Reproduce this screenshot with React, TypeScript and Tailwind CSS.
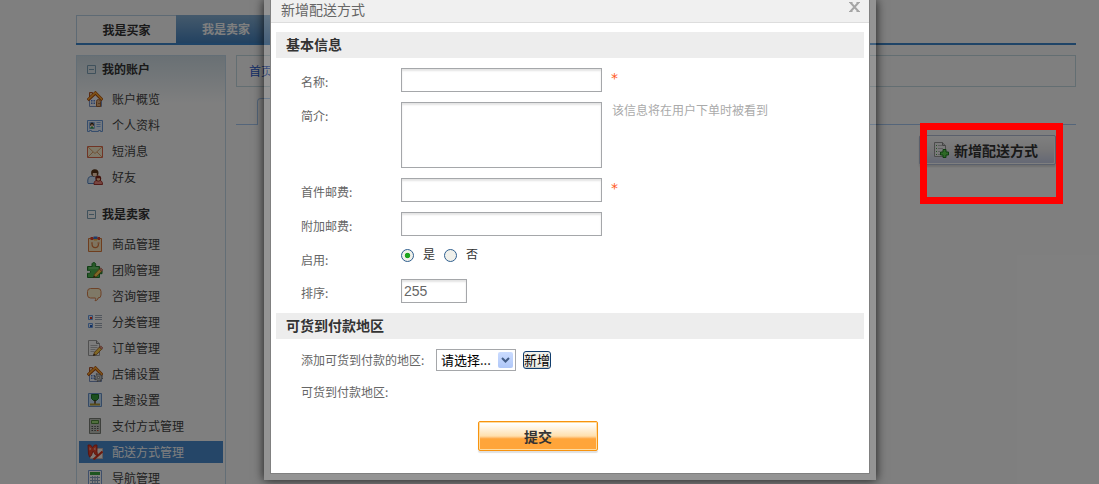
import React, { ReactNode } from "react";

function Icon({ children }: { children: ReactNode }) {
  return (
    <svg className="size-4 shrink-0" viewBox="0 0 16 16" fill="none" aria-hidden="true">
      {children}
    </svg>
  );
}

// small parts shared by several icons
const pencil = (
  <>
    <path d="M6.500 15.500l1-3.200 5-5.300 2.200 2.200-5 5.200z" fill="#ffd04a" stroke="#9a5a20" strokeWidth="0.800" />
    <path d="M12.500 7l1.200-1.200 2.200 2.200-1.200 1.200z" fill="#f0a090" stroke="#a04a30" strokeWidth="0.600" />
    <path d="M6.200 15.800l.7-2 1.400 1.300z" fill="#222" />
  </>
);

const house = (
  <>
    <path d="M2.500 8v7.500h12V8L8.500 2.500z" fill="#f6f8ff" stroke="#7b93c4" />
    <path d="M2.500 1.500h3v3.500l-3 2.500z" fill="#f0c8a0" stroke="#b0552a" />
    <path d="M.7 9.200l7.700-7.200 7 7.200" stroke="#a8480c" strokeWidth="3.200" />
    <path d="M1 8.600l7.400-6.900 6.700 6.900" stroke="#ffa52c" strokeWidth="1.600" />
    <path d="M4 9h1.500v1.500H4zM6.500 9H8v1.500H6.500zM4 11.500h1.500V13H4zM6.500 11.500H8V13H6.500z" fill="#5580d4" />
  </>
);

const icons = {
  home: (
    <Icon>
      {house}
      <path d="M9.500 15.500v-5a2 2 0 0 1 4 0v5z" fill="#e3ae7b" stroke="#a4622c" />
      <path d="M11.500 12h1v1h-1z" fill="#6d3b12" />
    </Icon>
  ),
  card: (
    <Icon>
      <path d="M.5 3.500h15v11h-2v-1h-2v1h-7v-1h-2v1h-2z" fill="#e8f2ff" stroke="#6c9bd8" />
      <path d="M2.500 5.500h5v6h-5z" fill="#fff" stroke="#86b0e6" />
      <circle cx="5" cy="7.500" r="1.900" fill="#3d2c1c" />
      <path d="M4 7.500h2v1.500H4z" fill="#ffc69a" />
      <path d="M3 11.500c0-2.500 4-2.500 4 0z" fill="#39a54a" />
      <path d="M9.500 5.500h4M9.500 7.500h4M9.500 9.500h4" stroke="#86b0e6" />
    </Icon>
  ),
  mail: (
    <Icon>
      <path d="M.5 3.500h15v11H.5z" fill="#fff3d4" stroke="#e0684a" />
      <path d="M1 14l5-5M15 14l-5-5M1 4l7 6.500L15 4" stroke="#dd9a60" strokeWidth="0.900" />
    </Icon>
  ),
  friends: (
    <Icon>
      <path d="M.8 14V11c.4-3 2-3.800 4.700-3.800S10 8.500 10.500 11v3.500H1z" fill="#d5e9ff" stroke="#5585c2" />
      <circle cx="7.800" cy="4" r="3.700" fill="#5a3517" />
      <path d="M5.800 4h4v2.200c-1 1.600-3 1.600-4 0z" fill="#ffd9b8" />
      <path d="M7 15.500c0-3.500 1.500-4.300 4.300-4.300s4.200 1 4.200 4.300z" fill="#f08a80" stroke="#a5352c" />
      <circle cx="11.300" cy="9.500" r="2.900" fill="#842417" />
      <path d="M9.800 9.300H13v1.800c-.8 1-2.400 1-3.200 0z" fill="#ffc99c" />
    </Icon>
  ),
  goods: (
    <Icon>
      <path d="M1.500 2.500h13v13h-13z" fill="#ffe8c0" stroke="#dd7a3c" />
      <path d="M3.500 1h3v3h-3z" fill="#e4442c" />
      <path d="M6.500.5h4V3h-4z" fill="#3d77d4" />
      <path d="M10.500 1h2.500v3h-2.500z" fill="#e4442c" />
      <path d="M7 3h3v1.500H7z" fill="#f7b83c" />
      <path d="M5 7.500c0 5.500 6.500 5.500 6.500 0" stroke="#dd7a3c" strokeWidth="1.200" />
      <path d="M4 7h2M10.500 7h2" stroke="#dd7a3c" />
    </Icon>
  ),
  puzzle: (
    <Icon>
      <path
        d="M.5 4.500h4.700C4.500 2 5.200.6 6.800.6S9.200 2 8.500 4.500h4v4.200H15v3h-2.500v3.800H.5v-4.300c2 .6 3-.2 3-1.400S2.500 8 .5 8.600z"
        fill="#4fb550"
        stroke="#217a2a"
      />
      <path d="M2 6h9" stroke="#8cda86" />
      {pencil}
    </Icon>
  ),
  chat: (
    <Icon>
      <path
        d="M3.500.5h7.500a3 3 0 0 1 3 3v3.500a3 3 0 0 1-3 3c0 1.500-1 2.700-3 2.700.8-1 .8-1.700.5-2.700h-5a3 3 0 0 1-3-3V3.500a3 3 0 0 1 3-3z"
        fill="#fff2ce"
        stroke="#dc8450"
      />
    </Icon>
  ),
  list: (
    <Icon>
      <path d="M1.500 1.500h4v4h-4zM1.500 9.500h4v4h-4z" fill="#e7f1ff" stroke="#6a9ce4" />
      <path d="M3 3h2v2H3z" fill="#e03018" />
      <path d="M3 11h2v2H3z" fill="#2460c4" />
      <path d="M8 1.500h7M8 3.500h7M8 5.500h7M8 9.500h7M8 11.500h7M8 13.500h7" stroke="#a3adbb" />
    </Icon>
  ),
  order: (
    <Icon>
      <path d="M1.500.5h8l3 3v12h-11z" fill="#fafafa" stroke="#a0a0a0" />
      <path d="M9.500.5v3h3" fill="#ddd" stroke="#888" />
      <path d="M3.500 5.500h7M3.500 7.500h7M3.500 9.500h5M3.500 11.500h4" stroke="#bbb" />
      {pencil}
    </Icon>
  ),
  shop: (
    <Icon>
      {house}
      <circle cx="11.500" cy="11.500" r="3.700" stroke="#777" strokeWidth="1.800" strokeDasharray="1.500 1.400" />
      <circle cx="11.500" cy="11.500" r="3" fill="#d5d5d5" stroke="#888" strokeWidth="0.800" />
      <circle cx="11.500" cy="11.500" r="1.200" fill="#fff" stroke="#666" strokeWidth="0.800" />
    </Icon>
  ),
  theme: (
    <Icon>
      <path d="M1.500 1.500h13v13h-13z" fill="#c8e4ff" stroke="#6a94cc" />
      <path d="M4.500 2.500h7v4L9.500 8.500h-3l-2-2z" fill="#35a03c" stroke="#1b7428" />
      <path d="M8 8v4" stroke="#54381c" strokeWidth="1.500" />
      <path d="M3 11.500h10v2H3z" fill="#b59a30" />
    </Icon>
  ),
  calc: (
    <Icon>
      <path d="M2.500.5h11v15h-11z" fill="#c2c6be" stroke="#7c8078" />
      <path d="M4.500 2.500h7v3h-7z" fill="#a3e07c" stroke="#508a3c" />
      <path d="M4.500 8.500H6M7.300 8.500h1.500M10 8.500h1.500M4.500 10.500H6M7.300 10.500h1.500M10 10.500h1.500M4.500 12.500H6M7.300 12.500h1.500" stroke="#555" strokeWidth="1.200" />
      <path d="M10 12.500h1.500" stroke="#d84020" strokeWidth="1.200" />
    </Icon>
  ),
  gift: (
    <Icon>
      <path d="M3.500 4.500h12v10h-12z" fill="#fff4ee" stroke="#c8b8b8" />
      <path d="M6.500 15.500l9-8" stroke="#d8341c" strokeWidth="2.200" />
      <path d="M1 1h2.500l2 2.500L7.500 1H10v6.500l.5 4-2-.5-2.500-4-1.500 4.500-2 1.500-1-3z" fill="#e8452c" stroke="#b32014" strokeWidth="0.800" />
      <path d="M2.500 3v3.500L4.500 5zM8.500 3v3.500L6.500 5z" fill="#ffab96" />
    </Icon>
  ),
  table: (
    <Icon>
      <path d="M1.500.5h13v15h-13z" fill="#fff" stroke="#7c9ed6" />
      <path d="M3 2h10v3H3z" fill="#3caa40" />
      <path d="M3 7.500h10M3 10.500h10M3 13.500h10M5.500 6v9M8 6v9M10.500 6v9" stroke="#8da4c2" />
    </Icon>
  ),
  add: (
    <Icon>
      <path d="M.5.5h8l3 3v11H.5z" fill="#f5f5f5" stroke="#999" />
      <path d="M8.500.5v3h3" fill="#ccc" stroke="#888" />
      <path d="M2 3.500h1M2 6.500h1M2 9.500h1M2 12.500h1" stroke="#4da84d" />
      <path d="M4 3.500h4M4 6.500h5M4 9.500h2M4 12.500h2" stroke="#bbb" />
      <path d="M9 7.500h3v2.500h2.500v3H12v2.500H9V13H6.500v-3H9z" fill="#5cd24c" stroke="#1e7c20" />
    </Icon>
  ),
};

const menu = [
  {
    title: "我的账户",
    items: [
      { label: "账户概览", icon: icons.home },
      { label: "个人资料", icon: icons.card },
      { label: "短消息", icon: icons.mail },
      { label: "好友", icon: icons.friends },
    ],
  },
  {
    title: "我是卖家",
    items: [
      { label: "商品管理", icon: icons.goods },
      { label: "团购管理", icon: icons.puzzle },
      { label: "咨询管理", icon: icons.chat },
      { label: "分类管理", icon: icons.list },
      { label: "订单管理", icon: icons.order },
      { label: "店铺设置", icon: icons.shop },
      { label: "主题设置", icon: icons.theme },
      { label: "支付方式管理", icon: icons.calc },
      { label: "配送方式管理", icon: icons.gift, active: true },
      { label: "导航管理", icon: icons.table },
    ],
  },
];

function Sidebar() {
  return (
    <aside className="w-[150px] shrink-0 border border-[#c6dcec] bg-linear-to-b from-[#d3e1e9] to-white to-[48px] px-0.5">
      {menu.map((group) => (
        <nav key={group.title} className="mb-2.5">
          <h2 className="flex h-[26px] items-center gap-1.5 pl-2 font-bold text-[#333]">
            <svg className="size-[9px]" viewBox="0 0 9 9" fill="none" aria-hidden="true">
              <path d="M.5.5h8v8h-8zM2 4.500h5" stroke="#7fa3b8" />
            </svg>
            {group.title}
          </h2>
          <ul className="mt-[5px]">
            {group.items.map((item) => (
              <li key={item.label} className="pt-px pb-[3px]">
                <a
                  href="#"
                  className={`flex h-[22px] items-center gap-[9px] pl-2 ${
                    item.active ? "bg-[#4a8cd0] text-white" : "text-[#444]"
                  }`}
                >
                  {item.icon}
                  {item.label}
                </a>
              </li>
            ))}
          </ul>
        </nav>
      ))}
    </aside>
  );
}

function Page() {
  return (
    <div className="h-full overflow-hidden bg-white pt-[15px] pr-[23px] pl-[76px]">
      <div className="flex border-b-2 border-[#3f88cf] font-bold">
        <a
          href="#"
          className="flex h-7 w-[100px] items-center justify-center border-t border-l border-[#bcd4e8] text-[#333]"
        >
          我是买家
        </a>
        <a
          href="#"
          className="flex h-7 w-[100px] items-center justify-center bg-linear-to-b from-[#8ab4d8] to-[#4584c2] text-white"
        >
          我是卖家
        </a>
      </div>
      <div className="mt-2.5 flex gap-2.5">
        <Sidebar />
        <main className="grow">
          <div className="flex h-8 items-center border border-[#c6dce4] px-3">
            <a href="#" className="text-[#2a5cd0]">
              首页
            </a>
          </div>
          <div className="mt-[11px] flex h-[27px] border-b border-[#a9cbf5] pl-[21px]">
            <div className="h-[27px] w-[100px] rounded-t-sm border-x border-t border-[#a9cbf5] bg-white"></div>
          </div>
          <div className="mt-2.5 flex justify-end pr-5">
            <button className="flex h-[30px] w-[137px] items-center gap-1 rounded-xs border border-[#b4c0d8] bg-linear-to-b from-white from-0% via-[#ececee] via-50% to-[#c8cfea] pl-3.5 text-[14px] font-bold whitespace-nowrap text-[#333] shadow-[inset_-1px_-1px_0_#fff,0_2px_2px_#ddd]">
              {icons.add}
              新增配送方式
            </button>
          </div>
        </main>
      </div>
    </div>
  );
}

const inputClass =
  "block h-6 border border-[#a5a7aa] bg-white px-0.5 font-['Liberation_Sans','Noto_Sans_CJK_SC',sans-serif] text-[14px] text-[#666] shadow-[inset_0_2px_2px_#e4e4e4] outline-none";

function Row({ label, id, children }: { label: string; id: string; children: ReactNode }) {
  return (
    <div className="flex items-start">
      <label htmlFor={id} className="h-[23px] w-[100px] leading-7">
        {label}
      </label>
      {children}
    </div>
  );
}

function Required() {
  return (
    <span className="ml-[9px] font-['DejaVu_Sans',sans-serif] text-[14px] leading-5 text-[#ff5a1e]">*</span>
  );
}

function Radio({ id, label, checked }: { id: string; label: string; checked?: boolean }) {
  return (
    <>
      <input
        id={id}
        type="radio"
        name="enabled"
        defaultChecked={checked}
        className="size-[13px] appearance-none rounded-full border border-[#2f5f8f] bg-[#f0f0ea] checked:bg-radial checked:from-[#1fa51f] checked:from-30% checked:to-[#f0f0ea] checked:to-40%"
      />
      <label htmlFor={id} className="mr-[9px] ml-[9px] pb-1 text-[#333]">
        {label}
      </label>
    </>
  );
}

function Dialog() {
  return (
    <div
      role="dialog"
      aria-label="新增配送方式"
      className="w-[612px] bg-white/17 px-1.5 pb-1.5 shadow-[0_0_10px_rgba(0,0,0,0.8)]"
    >
      <form className="border-x border-b border-[#808080] bg-white pb-[22px] text-[#666]">
        <div className="flex h-[23px] items-center justify-between border-b border-[#ddd] bg-[#f0f0f0] pr-[9px] pb-1 pl-2.5 text-[14px]">
          <h1>新增配送方式</h1>
          <button type="button" aria-label="关闭" className="pb-1">
            <svg className="h-2.5 w-[11px]" viewBox="0 0 11 10" fill="none">
              <path d="M1.500.5l8 9M9.500.5l-8 9" stroke="#a5a5a5" strokeWidth="2" />
              <path d="M0 .5h3.500M7.500.5H11M0 9.500h3.500M7.500 9.500H11" stroke="#a5a5a5" />
            </svg>
          </button>
        </div>
        <div className="px-[5px] pt-[9px]">
          <h2 className="h-[26px] bg-[#ededed] px-2.5 text-[14px] leading-6 font-bold text-[#333]">基本信息</h2>
          <div className="flex flex-col gap-2.5 py-2.5 pl-[25px]">
            <Row label="名称:" id="name">
              <input id="name" type="text" className={`${inputClass} w-[201px]`} />
              <Required />
            </Row>
            <Row label="简介:" id="intro">
              <textarea id="intro" className={`${inputClass} h-[66px] w-[201px] resize-none`} />
              <span className="ml-2.5 leading-4 text-[#aaa]">该信息将在用户下单时被看到</span>
            </Row>
            <Row label="首件邮费:" id="first">
              <input id="first" type="text" className={`${inputClass} w-[201px]`} />
              <Required />
            </Row>
            <Row label="附加邮费:" id="extra">
              <input id="extra" type="text" className={`${inputClass} w-[201px]`} />
            </Row>
            <Row label="启用:" id="enabled-yes">
              <div className="flex h-[19px] items-center">
                <Radio id="enabled-yes" label="是" checked />
                <Radio id="enabled-no" label="否" />
              </div>
            </Row>
            <Row label="排序:" id="sort">
              <input id="sort" type="text" defaultValue="255" className={`${inputClass} w-[66px]`} />
            </Row>
          </div>
          <h2 className="h-[26px] bg-[#ededed] px-2.5 text-[14px] leading-6 font-bold text-[#333]">可货到付款地区</h2>
          <div className="mt-2.5 flex h-[22px] items-center pl-[25px] text-[13px] text-black">
            <label htmlFor="region" className="w-[135px] text-[12px] text-[#666]">
              添加可货到付款的地区:
            </label>
            <div className="relative">
              <select
                id="region"
                className="block h-[22px] w-20 appearance-none border border-[#a5a7aa] bg-white pl-1"
              >
                <option>请选择...</option>
              </select>
              <span className="pointer-events-none absolute top-[3px] right-[3px] flex h-4 w-[15px] items-center justify-center rounded-xs bg-linear-to-b from-[#cbdcff] to-[#afc7f8]">
                <svg className="h-1.5 w-[9px]" viewBox="0 0 9 6" fill="none" aria-hidden="true">
                  <path d="M1 1l3.500 3.500L8 1" stroke="#435d86" strokeWidth="2" />
                </svg>
              </span>
            </div>
            <button
              type="button"
              className="ml-[7px] flex h-[18px] w-7 items-center justify-center rounded-[3px] border border-[#103c6c] bg-[#f2f1ea] whitespace-nowrap shadow-[inset_0_-1px_1px_#c8c8c0]"
            >
              新增
            </button>
          </div>
          <p className="mt-[11px] pl-[25px] leading-5">可货到付款地区:</p>
          <button
            type="submit"
            className="mt-[19px] ml-[202px] block h-[30px] w-[120px] rounded-xs border border-[#f7930f] bg-linear-to-b from-white from-5% via-[#ffe0ad] via-50% to-[#ffa53a] to-60% text-[14px] font-bold text-[#333] shadow-[inset_0_0_0_1px_#ffdca0,0_2px_1px_#e0e0e0]"
          >
            提交
          </button>
        </div>
      </form>
    </div>
  );
}

export default function App() {
  return (
    <div className="relative h-screen overflow-hidden font-['Noto_Sans_CJK_SC',sans-serif] text-[12px]">
      <Page />
      <div className="absolute inset-0 flex items-start justify-center bg-black/50 pl-[41px]">
        <Dialog />
      </div>
      {/* highlight around the add button */}
      <div className="pointer-events-none absolute top-[123px] right-9 h-[81px] w-[143px] border-7 border-[#ff0000]"></div>
    </div>
  );
}
